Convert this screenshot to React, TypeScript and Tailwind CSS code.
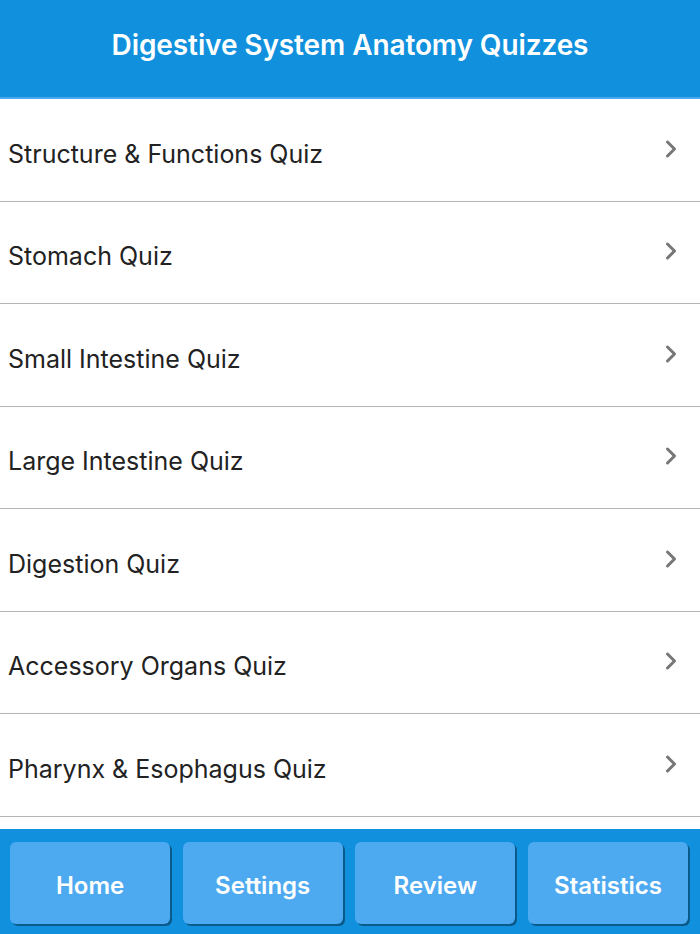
import { ChevronRight } from 'lucide-react';

const quizzes = [
  'Structure & Functions Quiz',
  'Stomach Quiz',
  'Small Intestine Quiz',
  'Large Intestine Quiz',
  'Digestion Quiz',
  'Accessory Organs Quiz',
  'Pharynx & Esophagus Quiz',
];

const tabs = ['Home', 'Settings', 'Review', 'Statistics'];

export default function App() {
  return (
    <div className="flex h-[934px] flex-col overflow-hidden bg-white font-['Inter',sans-serif]">
      <header className="flex h-[99px] shrink-0 items-center justify-center border-b-2 border-[#4aa8ee] bg-[#1191dd] pb-[8px]">
        <h1 className="text-[28px] leading-none font-semibold tracking-[-0.1px] text-white">
          Digestive System Anatomy Quizzes
        </h1>
      </header>

      <ul className="min-h-0 flex-1 overflow-hidden">
        {quizzes.map((q) => (
          <li
            key={q}
            className="flex h-[102.5px] items-center justify-between border-b border-[#b4b4b4] pl-[8px] pr-[15px]"
          >
            <span className="pt-[9px] text-[25px] leading-none text-[#222]">{q}</span>
            <ChevronRight className="mb-[2px] h-[28px] w-[28px] text-[#777]" strokeWidth={2.6} />
          </li>
        ))}
      </ul>

      <nav className="flex h-[105px] shrink-0 gap-[12.5px] bg-[#1191dd] pb-[10px] pl-[10px] pr-[12px] pt-[13px]">
        {tabs.map((t) => (
          <button
            key={t}
            className="flex flex-1 items-center justify-center rounded-[6px] bg-[#4eaaf0] pt-[5px] text-[24px] leading-none font-semibold text-white shadow-[2px_2px_0_#0b5a8c]"
          >
            {t}
          </button>
        ))}
      </nav>
    </div>
  );
}
